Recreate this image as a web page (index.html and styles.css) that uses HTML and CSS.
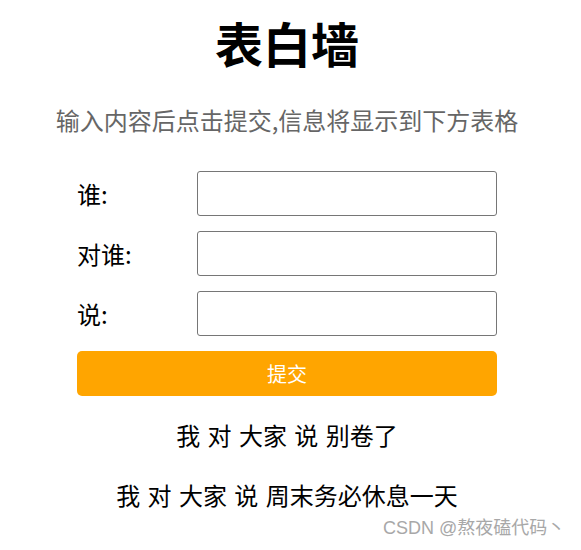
FILE: index.html
```html
<!DOCTYPE html>
<html lang="zh">
<head>
<meta charset="utf-8">
<title>表白墙</title>
<link rel="stylesheet" href="styles.css">
</head>
<body>
<div class="page">
  <h1 class="title">表白墙</h1>
  <p class="subtitle">输入内容后点击提交,信息将显示到下方表格</p>
  <div class="form">
    <div class="row"><span class="label">谁:</span><input class="edit" type="text"></div>
    <div class="row"><span class="label">对谁:</span><input class="edit" type="text"></div>
    <div class="row"><span class="label">说:</span><input class="edit" type="text"></div>
    <button class="submit" type="button">提交</button>
  </div>
  <div class="messages">
    <div class="msg">我 对 大家 说 别卷了</div>
    <div class="msg">我 对 大家 说 周末务必休息一天</div>
  </div>
</div>
<div class="watermark">CSDN @熬夜磕代码丶</div>
</body>
</html>
```

FILE: styles.css
```css
html, body {
  margin: 0;
  padding: 0;
  background: #fff;
}
body {
  font-family: "Noto Sans CJK SC", "Liberation Sans", sans-serif;
  color: #000;
  position: relative;
  width: 581px;
  height: 550px;
  overflow: hidden;
}
.page {
  width: 574px;
  display: flex;
  flex-direction: column;
  align-items: center;
}
.title {
  margin: 0;
  padding-top: 14px;
  font-size: 48px;
  line-height: 56px;
  font-weight: 700;
  text-align: center;
}
.subtitle {
  margin: 34px 0 0;
  font-size: 24px;
  line-height: 32px;
  color: #666;
  text-align: center;
}
.form {
  margin-top: 35px;
  width: 420px;
  display: flex;
  flex-direction: column;
  gap: 15px;
}
.row {
  display: flex;
  align-items: center;
  height: 45px;
}
.label {
  width: 120px;
  font-size: 24px;
  line-height: 45px;
}
.edit {
  box-sizing: border-box;
  width: 300px;
  height: 45px;
  margin: 0;
  border: 1px solid #767676;
  border-radius: 3px;
  padding: 0 6px;
  font-size: 20px;
  background: #fff;
}
.submit {
  height: 45px;
  width: 420px;
  border: none;
  border-radius: 5px;
  background: #ffa500;
  color: #fff;
  font-family: "Noto Sans CJK SC", sans-serif;
  font-size: 20px;
  line-height: 45px;
  padding: 0;
}
.messages {
  margin-top: 19px;
  display: flex;
  flex-direction: column;
  gap: 20px;
  align-items: center;
}
.msg {
  font-size: 24px;
  line-height: 40px;
  text-align: center;
  word-spacing: 2px;
}
.watermark {
  position: absolute;
  left: 383px;
  top: 516px;
  font-family: "Liberation Sans", "Noto Sans CJK SC", sans-serif;
  font-size: 18px;
  line-height: 24px;
  color: #a8a8a8;
  white-space: nowrap;
}
```
